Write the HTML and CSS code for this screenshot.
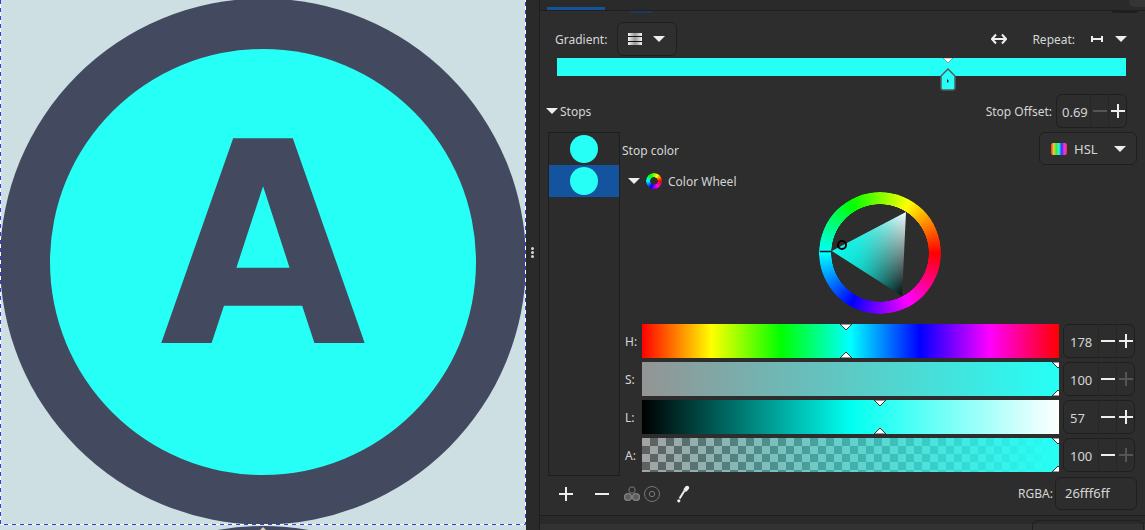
FILE: index.html
```html
<!DOCTYPE html>
<html lang="en">
<head>
    <meta charset="UTF-8">
    <meta name="viewport" content="width=device-width, initial-scale=1.0">
    <title>Fill and Stroke</title>
    <link rel="stylesheet" href="styles.css">
</head>
<body>
    <!-- Drawing canvas -->
    <div class="canvas">
        <svg class="art" width="526" height="530" viewBox="0 0 526 530">
            <rect width="526" height="530" fill="#cddfe2"/>
            <circle cx="263" cy="789" r="263" fill="#434a5f"/>
            <circle cx="263" cy="261.5" r="263" fill="#434a5f"/>
            <circle cx="263" cy="262" r="213" fill="#26fff6"/>
            <text class="art-letter" x="263" y="343" text-anchor="middle" textLength="206" lengthAdjust="spacingAndGlyphs">A</text>
            <path d="M263 527l3 3h-6z" fill="#d8cdb8"/>
            <path class="page-edge" d="M0.5 0V524.5H525.5V0"/>
            <path class="page-dash" d="M0.5 0V524.5H525.5V0"/>
        </svg>
    </div>

    <!-- Pane handle -->
    <div class="divider">
        <span class="grip"></span>
        <span class="grip"></span>
        <span class="grip"></span>
    </div>

    <div class="panel">
        <div class="tabs">
            <div class="tab"></div>
            <div class="peek peek-blue"></div>
            <div class="peek peek-dark"></div>
            <div class="peek peek-light"></div>
        </div>

        <div class="gradient-row">
            <span class="label">Gradient:</span>
            <button class="gradient-select">
                <span class="gradient-icon"><i></i><i></i><i></i></span>
                <span class="arrow"></span>
            </button>
            <svg class="flip-icon" width="16" height="12" viewBox="0 0 16 12">
                <path d="M5 1.5L1 6l4 4.5M11 1.5L15 6l-4 4.5M1 6h14"/>
            </svg>
            <span class="label repeat-label">Repeat:</span>
            <svg class="repeat-icon" width="12" height="6" viewBox="0 0 12 6">
                <path d="M1 0v6M11 0v6M1 3h10"/>
            </svg>
            <span class="arrow"></span>
        </div>

        <div class="gradient-bar">
            <svg class="stop-tick" width="10" height="6" viewBox="0 0 10 6"><path d="M0 0h10L5 5z"/></svg>
            <svg class="stop-handle" width="16" height="23" viewBox="0 0 16 23">
                <path d="M8 1L15 8v12a2 2 0 0 1-2 2H3a2 2 0 0 1-2-2V8z"/>
                <path class="stop-dot" d="M7 11l2 2-2 2z"/>
            </svg>
        </div>

        <div class="stops-row">
            <div class="stops-title"><span class="arrow"></span><span class="label">Stops</span></div>
            <div class="offset">
                <span class="label">Stop Offset:</span>
                <div class="spin spin-offset">
                    <span class="spin-value">0.69</span>
                    <span class="spin-btn"><svg class="pm dim" viewBox="0 0 14 14"><path d="M0 7h14"/></svg></span>
                    <span class="spin-btn"><svg class="pm" viewBox="0 0 14 14"><path d="M0 7h14M7 0v14"/></svg></span>
                </div>
            </div>
        </div>

        <div class="stops-body">
            <div class="stop-list">
                <div class="stop-item"><span class="swatch"></span></div>
                <div class="stop-item selected"><span class="swatch"></span></div>
            </div>

            <div class="stop-editor">
                <div class="stop-color-row">
                    <span class="label">Stop color</span>
                    <button class="mode-select">
                        <span class="rainbow"></span>
                        <span class="mode-name">HSL</span>
                        <span class="arrow"></span>
                    </button>
                </div>

                <div class="wheel-title">
                    <span class="arrow"></span>
                    <span class="wheel-icon"></span>
                    <span class="label">Color Wheel</span>
                </div>

                <div class="wheel">
                    <div class="hue-ring"></div>
                    <svg class="wheel-marks" width="122" height="122" viewBox="0 0 122 122">
                        <defs>
                            <linearGradient id="sv" gradientUnits="userSpaceOnUse" x1="87" y1="20" x2="83" y2="104">
                                <stop offset="0" stop-color="#fff"/>
                                <stop offset="1" stop-color="#000"/>
                            </linearGradient>
                            <linearGradient id="hue" gradientUnits="userSpaceOnUse" x1="13" y1="59" x2="88" y2="62">
                                <stop offset="0" stop-color="#00fff0"/>
                                <stop offset="0.4" stop-color="#00fff0" stop-opacity="0.75"/>
                                <stop offset="1" stop-color="#00fff0" stop-opacity="0"/>
                            </linearGradient>
                        </defs>
                        <path d="M13 59L87 20L83 104z" fill="url(#sv)"/>
                        <path d="M13 59L87 20L83 104z" fill="url(#hue)"/>
                        <path class="wheel-line" d="M1 59.5H12"/>
                        <circle class="wheel-dot" cx="23" cy="53" r="4"/>
                    </svg>
                </div>

                <div class="sliders">
                    <span class="label">H:</span>
                    <div class="track track-h">
                        <svg class="tick tick-top" style="left: 204px" viewBox="0 0 12 6"><path d="M0 0h12L6 6z"/></svg>
                        <svg class="tick tick-bottom" style="left: 204px" viewBox="0 0 12 6"><path d="M0 6h12L6 0z"/></svg>
                    </div>
                    <div class="spin">
                        <span class="spin-value">178</span>
                        <span class="spin-btn"><svg class="pm" viewBox="0 0 14 14"><path d="M0 7h14"/></svg></span>
                        <span class="spin-btn"><svg class="pm" viewBox="0 0 14 14"><path d="M0 7h14M7 0v14"/></svg></span>
                    </div>

                    <span class="label">S:</span>
                    <div class="track track-s">
                        <svg class="tick tick-top" style="left: 416px" viewBox="0 0 12 6"><path d="M0 0h12L6 6z"/></svg>
                        <svg class="tick tick-bottom" style="left: 416px" viewBox="0 0 12 6"><path d="M0 6h12L6 0z"/></svg>
                    </div>
                    <div class="spin">
                        <span class="spin-value">100</span>
                        <span class="spin-btn"><svg class="pm" viewBox="0 0 14 14"><path d="M0 7h14"/></svg></span>
                        <span class="spin-btn"><svg class="pm dim" viewBox="0 0 14 14"><path d="M0 7h14M7 0v14"/></svg></span>
                    </div>

                    <span class="label">L:</span>
                    <div class="track track-l">
                        <svg class="tick tick-top" style="left: 238px" viewBox="0 0 12 6"><path d="M0 0h12L6 6z"/></svg>
                        <svg class="tick tick-bottom" style="left: 238px" viewBox="0 0 12 6"><path d="M0 6h12L6 0z"/></svg>
                    </div>
                    <div class="spin">
                        <span class="spin-value">57</span>
                        <span class="spin-btn"><svg class="pm" viewBox="0 0 14 14"><path d="M0 7h14"/></svg></span>
                        <span class="spin-btn"><svg class="pm" viewBox="0 0 14 14"><path d="M0 7h14M7 0v14"/></svg></span>
                    </div>

                    <span class="label">A:</span>
                    <div class="track track-a">
                        <svg class="tick tick-top" style="left: 416px" viewBox="0 0 12 6"><path d="M0 0h12L6 6z"/></svg>
                        <svg class="tick tick-bottom" style="left: 416px" viewBox="0 0 12 6"><path d="M0 6h12L6 0z"/></svg>
                    </div>
                    <div class="spin">
                        <span class="spin-value">100</span>
                        <span class="spin-btn"><svg class="pm" viewBox="0 0 14 14"><path d="M0 7h14"/></svg></span>
                        <span class="spin-btn"><svg class="pm dim" viewBox="0 0 14 14"><path d="M0 7h14M7 0v14"/></svg></span>
                    </div>
                </div>
            </div>
        </div>

        <div class="bottom-row">
            <svg class="pm tool-plus" viewBox="0 0 14 14"><path d="M0 7h14M7 0v14"/></svg>
            <svg class="pm tool-minus" viewBox="0 0 14 14"><path d="M0 7h14"/></svg>
            <svg class="tool-icon tool-merge" width="16" height="16" viewBox="0 0 16 16">
                <circle cx="8" cy="4" r="3.2"/>
                <circle class="solid" cx="4" cy="11" r="3.4"/>
                <circle class="solid" cx="12" cy="11" r="3.4"/>
            </svg>
            <svg class="tool-icon tool-rings" width="16" height="16" viewBox="0 0 16 16">
                <circle cx="8" cy="8" r="7.5"/>
                <circle cx="8" cy="8" r="2.7"/>
            </svg>
            <svg class="tool-picker" width="13" height="18" viewBox="0 0 13 18">
                <path class="picker-body" d="M8.6 1.2c1.2-1.2 3.6-.4 3.6 1.6 0 .8-.4 1.4-1 2L9 7 6.4 4.4z"/>
                <path class="picker-tube" d="M7.6 5.5L2.6 13.5"/>
                <circle class="picker-tip" cx="1.8" cy="15.8" r="1.6"/>
            </svg>
            <span class="label rgba-label">RGBA:</span>
            <div class="rgba-entry">26fff6ff</div>
        </div>

        <div class="footer">
            <div class="peek peek-footer"></div>
        </div>
    </div>
</body>
</html>
```

FILE: styles.css
```css
body {
    display: flex;
    width: 1145px;
    height: 530px;
    margin: 0;
    overflow: hidden;
    background-color: #2d2d2d;
    color: #d4d6d6;
    font-family: "Noto Sans", sans-serif;
    font-size: 12px;
}
button {
    color: inherit;
    font: inherit;
    padding: 0;
    cursor: pointer;
}
svg {
    display: block;
    flex: none;
}

/* Canvas */
.canvas {
    width: 526px;
    flex: none;
}
.art {
    width: 526px;
    height: 530px;
}
.art-letter {
    fill: #434a5f;
    font-family: "DejaVu Sans", sans-serif;
    font-weight: 700;
    font-size: 281px;
}
.page-edge {
    fill: none;
    stroke: #fff;
}
.page-dash {
    fill: none;
    stroke: #3b3bd8;
    stroke-dasharray: 4 4;
}

/* Pane handle */
.divider {
    width: 14px;
    flex: none;
    display: flex;
    flex-direction: column;
    align-items: center;
    justify-content: center;
    gap: 1px;
    padding-bottom: 26px;
    box-sizing: border-box;
    border-right: 1px solid #1e1e1e;
    background-color: #2a2a2a;
}
.grip {
    width: 3px;
    height: 3px;
    border-radius: 50%;
    background-color: #d6d6d6;
}

/* Right hand panel */
.panel {
    position: relative;
    flex: 1;
    display: flex;
    flex-direction: column;
    min-width: 0;
}
.tabs {
    position: relative;
    height: 10px;
    flex: none;
    border-bottom: 1px solid #1f1f1f;
    background-color: #2a2a2a;
}
.tab {
    width: 58px;
    height: 3px;
    margin-left: 7px;
    position: relative;
    top: 7px;
    background-color: #14539e;
}
.peek {
    position: absolute;
}
.peek-blue {
    left: 90px;
    top: 11px;
    width: 23px;
    height: 2px;
    border-radius: 0 0 4px 4px;
    background-color: #1d3a5e;
}
.peek-dark {
    left: 572px;
    top: 11px;
    width: 26px;
    height: 2px;
    border-radius: 0 0 5px 5px;
    background-color: #1f1f1f;
}
.peek-light {
    left: 589px;
    top: 0;
    width: 16px;
    height: 7px;
    border-radius: 0 0 0 5px;
    background-color: #353535;
}
.label {
    white-space: nowrap;
}
.arrow {
    display: block;
    flex: none;
    width: 0;
    height: 0;
    border-left: 6px solid transparent;
    border-right: 6px solid transparent;
    border-top: 6px solid #eee;
}

/* Gradient selector */
.gradient-row {
    display: flex;
    align-items: center;
    height: 34px;
    margin-top: 11px;
    padding-left: 15px;
    flex: none;
}
.gradient-select {
    display: flex;
    align-items: center;
    gap: 11px;
    width: 60px;
    height: 34px;
    margin-left: 10px;
    padding-left: 10px;
    box-sizing: border-box;
    border: 1px solid #1f1f1f;
    border-radius: 6px;
    background-color: #2f2f2f;
}
.gradient-icon {
    display: flex;
    flex-direction: column;
    gap: 1px;
    width: 14px;
    background-color: #151515;
}
.gradient-icon i {
    display: block;
    height: 3.67px;
    background: linear-gradient(to right, #f2f2f2, #999 50%, #f2f2f2);
}
.flip-icon {
    margin-left: 314px;
}
.flip-icon path {
    fill: none;
    stroke: #eee;
    stroke-width: 2;
}
.repeat-label {
    margin-left: 25px;
}
.repeat-icon {
    margin-left: 16px;
    margin-right: 12px;
}
.repeat-icon path {
    fill: none;
    stroke: #eee;
    stroke-width: 2;
}
.gradient-bar {
    position: relative;
    height: 18px;
    margin: 2px 19px 0 17px;
    flex: none;
    background-color: #26fff6;
}
.stop-tick {
    position: absolute;
    left: 386px;
    top: 0;
}
.stop-tick path {
    fill: #fff;
    stroke: #555;
    stroke-width: 0.5;
}
.stop-handle {
    position: absolute;
    left: 383px;
    top: 10px;
}
.stop-handle path {
    fill: #26fff6;
    stroke: #4f5f61;
    stroke-width: 1.5;
}
.stop-handle .stop-dot {
    fill: #223;
    stroke: none;
}

/* Stops heading */
.stops-row {
    display: flex;
    align-items: center;
    justify-content: space-between;
    height: 33px;
    margin-top: 18px;
    padding: 0 18px 0 6px;
    flex: none;
}
.stops-row .label {
    padding-top: 2px;
}
.stops-title {
    display: flex;
    align-items: center;
    gap: 2px;
}
.offset {
    display: flex;
    align-items: center;
    gap: 4px;
}

/* Spin buttons */
.spin {
    display: flex;
    align-items: stretch;
    width: 72px;
    height: 34px;
    box-sizing: border-box;
    border: 1px solid #1f1f1f;
    border-radius: 6px;
    background-color: #2d2d2d;
}
.spin-offset {
    width: 71px;
}
.spin-offset .spin-value {
    padding-left: 5px;
}
.spin-value {
    flex: 1;
    padding-top: 1px;
    padding-left: 6px;
    line-height: 32px;
    font-size: 13px;
}
.spin-btn {
    width: 17px;
    flex: none;
    display: flex;
    align-items: center;
    justify-content: center;
    border-left: 1px solid #272727;
}
.pm {
    width: 14px;
    height: 14px;
    overflow: visible;
}
.pm path {
    fill: none;
    stroke: #eee;
    stroke-width: 2;
}
.pm.dim path {
    stroke: #555;
}

/* Stops list */
.stops-body {
    display: flex;
    height: 344px;
    margin-top: 5px;
    padding-left: 8px;
    flex: none;
}
.stop-list {
    width: 72px;
    flex: none;
    box-sizing: border-box;
    border: 1px solid #1e1e1e;
    background-color: #2c2c2c;
}
.stop-item {
    display: flex;
    align-items: center;
    justify-content: center;
    height: 32px;
}
.stop-item.selected {
    background-color: #14539e;
}
.swatch {
    width: 28px;
    height: 28px;
    border-radius: 50%;
    background-color: #26fff6;
}

/* Stop editor */
.stop-editor {
    flex: 1;
    min-width: 0;
    display: flex;
    flex-direction: column;
    padding-left: 2px;
    padding-right: 8px;
}
.stop-color-row {
    display: flex;
    align-items: center;
    justify-content: space-between;
    height: 33px;
    flex: none;
}
.stop-color-row .label {
    padding-top: 3px;
}
.mode-select {
    display: flex;
    align-items: center;
    width: 98px;
    height: 33px;
    padding-left: 11px;
    box-sizing: border-box;
    border: 1px solid #1f1f1f;
    border-radius: 6px;
    background-color: #2f2f2f;
}
.rainbow {
    width: 16px;
    height: 12px;
    border-radius: 2px;
    background: linear-gradient(to right, #e33, #ec3, #3e3, #3ee, #33e, #e3e, #e33);
}
.mode-name {
    margin-left: 7px;
    margin-right: 16px;
    padding-top: 1px;
    font-size: 13px;
}
.wheel-title {
    display: flex;
    align-items: center;
    height: 32px;
    padding-left: 6px;
    flex: none;
}
.wheel-icon {
    width: 16px;
    height: 16px;
    margin-left: 6px;
    margin-right: 6px;
    border-radius: 50%;
    background: conic-gradient(from 90deg, red, magenta, blue, cyan, lime, yellow, red);
    -webkit-mask: radial-gradient(circle, transparent 3.5px, #000 4px);
    mask: radial-gradient(circle, transparent 3.5px, #000 4px);
}
.wheel {
    position: relative;
    width: 122px;
    height: 122px;
    margin: -5px 0 10px 197px;
    flex: none;
}
.hue-ring {
    width: 122px;
    height: 122px;
    border-radius: 50%;
    background: conic-gradient(from 90deg, red, magenta, blue, cyan, lime, yellow, red);
    -webkit-mask: radial-gradient(circle, transparent 48.5px, #000 49px);
    mask: radial-gradient(circle, transparent 48.5px, #000 49px);
}
.wheel-marks {
    position: absolute;
    left: 0;
    top: 0;
}
.wheel-line {
    fill: none;
    stroke: #111;
    stroke-width: 1.5;
}
.wheel-dot {
    fill: none;
    stroke: #000;
    stroke-width: 2;
}

/* Sliders */
.sliders {
    display: grid;
    grid-template-columns: 20px 417px 72px;
    grid-auto-rows: 34px;
    row-gap: 4px;
    align-items: center;
}
.sliders .spin {
    margin-left: 4px;
}
.sliders .label {
    padding-left: 3px;
    padding-top: 1px;
}
.track {
    position: relative;
    height: 34px;
    overflow: hidden;
}
.track-h {
    background: linear-gradient(to right, red, yellow, lime, cyan, blue, magenta, red);
}
.track-s {
    background: linear-gradient(to right, #949494, #26fff6);
}
.track-l {
    background: linear-gradient(to right, #000, #00fff0 50%, #fff);
}
.track-a {
    background: linear-gradient(to right, rgba(38, 255, 246, 0), #26fff6), repeating-conic-gradient(#5f5f5f 0 25%, #a3a3a3 0 50%) 0 0 / 16px 16px;
}
.tick {
    position: absolute;
    width: 12px;
    height: 6px;
    margin-left: -6px;
}
.tick path {
    fill: #fff;
    stroke: #333;
    stroke-width: 1;
}
.tick-top {
    top: 0;
}
.tick-bottom {
    bottom: 0;
}

/* Bottom tools */
.bottom-row {
    display: flex;
    align-items: center;
    height: 33px;
    margin-top: 1px;
    padding-left: 19px;
    flex: none;
}
.tool-minus {
    margin-left: 22px;
}
.tool-merge {
    margin-left: 15px;
}
.tool-rings {
    margin-left: 4px;
}
.tool-icon circle {
    fill: none;
    stroke: #777;
    stroke-width: 1;
}
.tool-icon .solid {
    fill: #5c5c5c;
    stroke: #808080;
    stroke-width: 1.4;
}
.tool-picker {
    margin-left: 17px;
}
.picker-body {
    fill: #eee;
}
.picker-tube {
    fill: none;
    stroke: #eee;
    stroke-width: 2;
}
.picker-tip {
    fill: #eee;
}
.rgba-label {
    margin-left: auto;
    margin-right: 2px;
}
.rgba-entry {
    width: 82px;
    height: 33px;
    margin-right: 8px;
    padding-left: 9px;
    box-sizing: border-box;
    line-height: 31px;
    font-size: 13px;
    border: 1px solid #1f1f1f;
    border-radius: 6px;
}
.footer {
    position: relative;
    flex: 1;
    margin-top: 5px;
    border-top: 1px solid #1e1e1e;
    background: linear-gradient(to bottom, #2a2a2a 8px, #323232 8px);
}
.peek-footer {
    left: 492px;
    top: 4px;
    width: 110px;
    height: 20px;
    border: 1px solid #1f1f1f;
    border-radius: 6px;
}
```
